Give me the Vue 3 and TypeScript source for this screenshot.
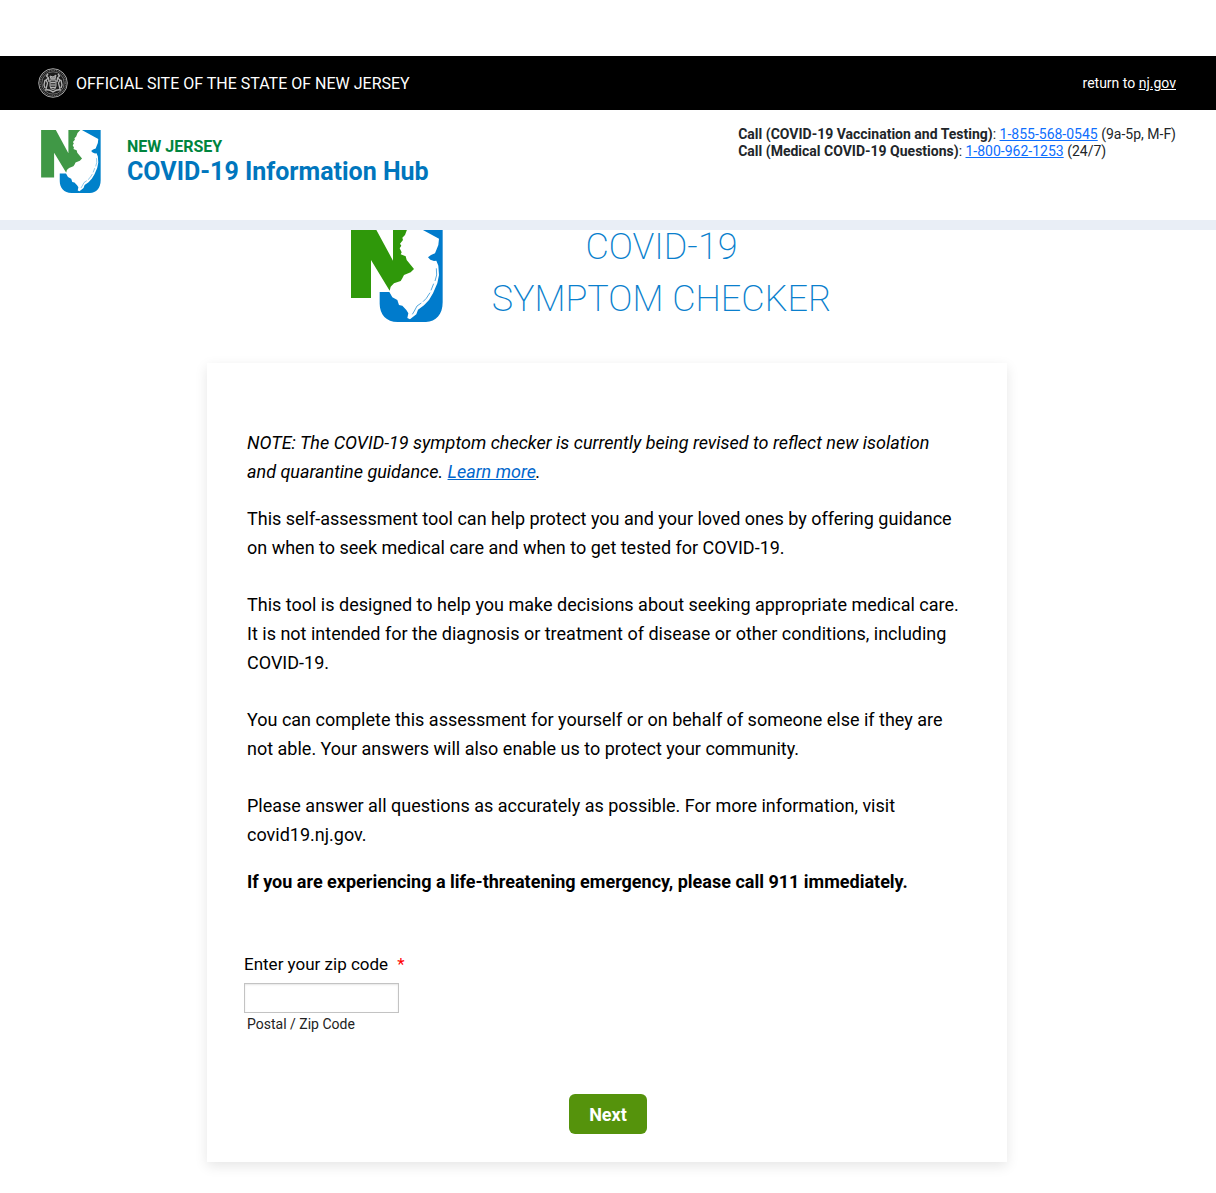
<script setup lang="ts">
import { ref } from 'vue'

interface Hotline {
  label: string
  phone: string
  hours: string
}

const hotlines: Hotline[] = [
  { label: 'Call (COVID-19 Vaccination and Testing)', phone: '1-855-568-0545', hours: '(9a-5p, M-F)' },
  { label: 'Call (Medical COVID-19 Questions)', phone: '1-800-962-1253', hours: '(24/7)' },
]

const paragraphs: string[] = [
  'This self-assessment tool can help protect you and your loved ones by offering guidance on when to seek medical care and when to get tested for COVID-19.',
  'This tool is designed to help you make decisions about seeking appropriate medical care. It is not intended for the diagnosis or treatment of disease or other conditions, including COVID-19.',
  'You can complete this assessment for yourself or on behalf of someone else if they are not able. Your answers will also enable us to protect your community.',
  'Please answer all questions as accurately as possible. For more information, visit covid19.nj.gov.',
]

const zip = ref('')
</script>

<template>
  <div class="page">
    <svg class="defs" aria-hidden="true">
      <defs>
        <symbol id="nj-logo" viewBox="0 0 276 291">
          <path class="logo-blue" d="M190 0H275V232C275 268 255 291 225 291H140C106 291 86 268 86 236V201H118L200 150Z" />
          <path class="logo-green" d="M0 0H68L126 107V0H192V134L160 165L130 185L116 197L60 105V219H0Z" />
          <path
            fill="#fff"
            d="M188 0L264 41L262 60L256 75L252 85L240 90L231 97L238 104L249 108L256 107L262 122L264 150L259 175L246 205L234 225L219 241L201 254L196 268L177 283L169 279L172 265L166 255L154 242L144 240L139 225L124 217L115 201L116 197L119 185L129 175L149 168L154 160L159 150L179 142L189 132L167 105L164 94L149 88L152 82L146 70L151 62L147 56L156 45L154 38L162 30L168 14L181 0Z"
          />
          <path
            class="logo-coast"
            d="M256 130L257 150L252 168M248 176L240 196M237 203L226 220L216 230M211 234L198 243L190 258L184 268"
          />
        </symbol>
      </defs>
    </svg>

    <header>
      <div class="state-bar">
        <div class="state-name">
          <svg class="seal" viewBox="0 0 30 30" aria-hidden="true">
            <circle cx="15" cy="15" r="14.3" fill="#161616" stroke="#a5a5a5" stroke-width="1" />
            <circle cx="15" cy="15" r="12.8" fill="none" stroke="#666" stroke-width="1.4" stroke-dasharray="1 .8" />
            <circle cx="15" cy="15" r="11.2" fill="#1c1c1c" stroke="#8f8f8f" stroke-width=".7" />
            <g fill="none" stroke="#b4b4b4" stroke-width="1">
              <path d="M12 12H18V18Q18 21 15 22Q12 21 12 18Z" fill="#444" />
              <path d="M12.5 14.500H17.500M12.500 17H17.500M13 19.500H17" />
              <path d="M13 11L12 8L15 9L18 7L17 11Z" fill="#888" />
              <path d="M10 6L8.500 8L10.500 10L8 12L9.500 15L8 21M7 12L6 17L7 20M10.500 10L11 14" stroke-width="1.3" />
              <path d="M20 6L21.500 8L19.500 10L22 12L20.500 15L22 21M23 12L24 17L23 20M19.500 10L19 14" stroke-width="1.3" />
              <path d="M7 22Q11 21 15 24Q19 21 23 22" stroke-width="1.4" />
            </g>
          </svg>
          <span>OFFICIAL SITE OF THE STATE OF NEW JERSEY</span>
        </div>
        <div class="return">return to <a href="#">nj.gov</a></div>
      </div>

      <div class="hub-bar">
        <div class="hub">
          <svg class="hub-logo" role="img" aria-label="New Jersey"><use href="#nj-logo" /></svg>
          <div>
            <div class="hub-state">NEW JERSEY</div>
            <div class="hub-title">COVID-19 Information Hub</div>
          </div>
        </div>
        <div class="hotlines">
          <div v-for="line in hotlines" :key="line.phone">
            <strong>{{ line.label }}</strong>: <a :href="'tel:' + line.phone">{{ line.phone }}</a> {{ line.hours }}
          </div>
        </div>
      </div>
    </header>

    <main>
      <div class="banner">
        <div class="banner-logo">
          <svg role="img" aria-label="New Jersey"><use href="#nj-logo" /></svg>
        </div>
        <h1>
          <span>COVID-19</span>
          <span>SYMPTOM CHECKER</span>
        </h1>
      </div>

      <form class="card" @submit.prevent>
        <div class="copy">
          <p class="note">
            NOTE: The COVID-19 symptom checker is currently being revised to reflect new isolation and quarantine
            guidance. <a href="#">Learn more</a>.
          </p>
          <div class="intro">
            <p v-for="(text, i) in paragraphs" :key="i">{{ text }}</p>
          </div>
          <p class="urgent">If you are experiencing a life-threatening emergency, please call 911 immediately.</p>
        </div>

        <div class="field">
          <label for="zip">Enter your zip code <span class="required">*</span></label>
          <input id="zip" v-model="zip" type="text" required aria-describedby="zip-hint" />
          <small id="zip-hint">Postal / Zip Code</small>
        </div>

        <button type="submit">Next</button>
      </form>
    </main>
  </div>
</template>

<style>
body {
  margin: 0;
  background: #fff;
}
</style>

<style scoped>
.page {
  padding-top: 56px;
  font-family: Roboto, "Liberation Sans", sans-serif;
  color: #000;
}

.defs {
  position: absolute;
  width: 0;
  height: 0;
}

.logo-green {
  fill: var(--logo-green);
}

.logo-blue {
  fill: var(--logo-blue);
}

.logo-coast {
  fill: none;
  stroke: var(--logo-blue);
  stroke-width: 2;
}

.state-bar {
  display: flex;
  justify-content: space-between;
  align-items: center;
  height: 54px;
  padding: 0 40px 0 38px;
  background: #000;
  color: #fff;
}

.state-name {
  display: flex;
  align-items: center;
  gap: 8px;
  font-size: 16px;
}

.seal {
  width: 30px;
  height: 30px;
}

.return {
  font-size: 14px;
}

.return a {
  color: inherit;
}

.hub-bar {
  display: flex;
  justify-content: space-between;
  align-items: flex-start;
  min-height: 94px;
  padding: 16px 40px 0 41px;
  border-bottom: 10px solid #e9eef6;
}

.hub {
  display: flex;
  gap: 26px;
  padding-top: 4px;
}

.hub-logo {
  --logo-green: #409846;
  --logo-blue: #0081ca;
  width: 60px;
  height: 63px;
}

.hub-state {
  margin-top: 8px;
  font-size: 16px;
  line-height: 18px;
  font-weight: 700;
  color: #00853e;
}

.hub-title {
  font-size: 25px;
  line-height: 32px;
  font-weight: 700;
  color: #0076bd;
}

.hotlines {
  font-size: 14px;
  line-height: 17px;
  color: #212529;
}

.hotlines a {
  color: #0d6efd;
}

main {
  padding: 0 2px 24px 0;
}

.banner {
  display: flex;
  justify-content: center;
  gap: 49px;
  height: 133px;
  padding-right: 32px;
}

.banner-logo {
  overflow: hidden;
}

.banner-logo svg {
  --logo-green: #2f980a;
  --logo-blue: #007bcc;
  display: block;
  width: 92px;
  height: 97px;
  margin-top: -5px;
}

h1 {
  display: flex;
  flex-direction: column;
  gap: 18px;
  margin: 0;
  font-size: 36px;
  line-height: 34px;
  font-weight: 200;
  text-align: center;
  color: #0a7fcd;
}

.card {
  box-sizing: border-box;
  display: flex;
  flex-direction: column;
  max-width: 800px;
  margin: 0 auto;
  padding: 65px 35px 28px 37px;
  background: #fff;
  box-shadow: 0 4px 12px rgba(0, 0, 0, 0.1);
}

.copy {
  display: flex;
  flex-direction: column;
  gap: 18px;
  padding: 0 12px 0 3px;
  font-size: 18px;
  line-height: 29px;
}

.copy p {
  margin: 0;
}

.note {
  font-style: italic;
}

.note a {
  color: #0066cc;
}

.intro {
  display: flex;
  flex-direction: column;
  gap: 28px;
}

.urgent {
  font-weight: 700;
}

.field {
  display: flex;
  flex-direction: column;
  align-items: flex-start;
  margin: 56px 0 61px;
}

label {
  font-size: 17px;
  line-height: 24px;
}

.required {
  margin-left: 5px;
  color: #f00;
}

input {
  box-sizing: border-box;
  width: 155px;
  height: 30px;
  margin: 7px 0 2px;
  padding: 4px;
  border: 1px solid #c3c3c3;
  box-shadow: inset 0 1px 2px rgba(0, 0, 0, 0.1);
  font: inherit;
}

small {
  padding-left: 3px;
  font-size: 14px;
  line-height: 18px;
  color: #222;
}

button {
  align-self: center;
  height: 40px;
  padding: 0 20px;
  border: 0;
  border-radius: 6px;
  background: #55930c;
  color: #fff;
  font-family: inherit;
  font-size: 18px;
  font-weight: 700;
}
</style>
